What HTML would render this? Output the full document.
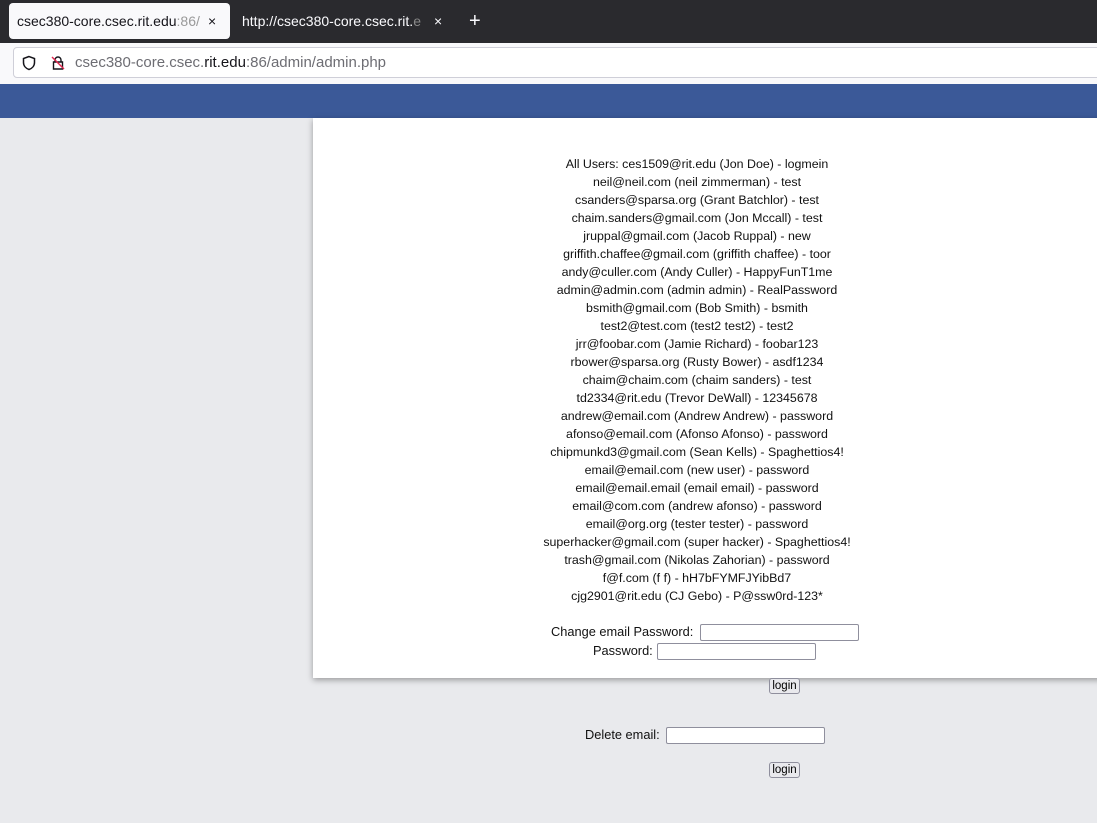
<!DOCTYPE html>
<html><head><meta charset="utf-8"><style>
body{margin:0;width:1097px;height:823px;overflow:hidden;background:#e9eaed;font-family:"Liberation Sans",sans-serif;position:relative}
.tabs{position:absolute;left:0;top:0;width:1097px;height:43px;background:#2a2a2e}
.tab1{position:absolute;left:9px;top:3px;width:221px;height:36px;background:#f9f9fb;border-radius:4px;font-size:14px;color:#15141a;line-height:36px;padding-left:8px;box-sizing:border-box;white-space:nowrap;overflow:hidden}
.tab2{position:absolute;left:242px;top:3px;font-size:14px;color:#fbfbfe;line-height:36px;white-space:nowrap}
.x{position:absolute;font-size:14px;top:3px;line-height:36px}
.bar{position:absolute;left:0;top:43px;width:1097px;height:41px;background:#f9f9fb}
.url{position:absolute;left:13px;top:47px;width:1090px;height:31px;border:1px solid #cfcfd8;border-radius:4px;background:#fff;box-sizing:border-box}
.urltxt{position:absolute;left:75px;top:54px;font-size:15px;color:#6d6d73}
.urltxt b{font-weight:normal;color:#15141a}
.blue{position:absolute;left:0;top:84px;width:1097px;height:34px;background:#3b5998}
.panel{position:absolute;left:313px;top:118px;width:800px;height:560px;background:#fff;box-shadow:0 2px 6px rgba(0,0,0,.35)}
.list{position:absolute;left:313px;top:155px;width:768px;text-align:center;font-size:12.4px;line-height:18px;color:#111}
.f{position:absolute;font-size:12.8px;color:#111}
.in{position:absolute;width:157px;height:15px;border:1px solid #8f8f9d;border-radius:2px;background:#fff}
.btn{position:absolute;width:29px;height:14px;border:1px solid #8f8f9d;border-radius:3px;background:#e9e9ed;font-size:11.5px;line-height:14px;text-align:center;color:#000}
</style></head><body>
<div class="tabs"></div>
<div class="tab1">csec380-core.csec.rit.edu<span style="color:#999">:86/</span></div>
<div class="x" style="left:208px;color:#15141a">×</div>
<div class="tab2">http://csec380-core.csec.rit.<span style="color:#888">e</span></div>
<div class="x" style="left:434px;color:#fbfbfe">×</div>
<div class="x" style="left:469px;color:#fbfbfe;font-size:20px">+</div>
<div class="bar"></div>
<div class="url"></div>
<svg style="position:absolute;left:21px;top:55px" width="16" height="16" viewBox="0 0 16 16"><path d="M8 1.5L2.5 3.5v4c0 3.5 2.5 6 5.5 7 3-1 5.5-3.5 5.5-7v-4z" fill="none" stroke="#15141a" stroke-width="1.5"/></svg>
<svg style="position:absolute;left:50px;top:55px" width="16" height="16" viewBox="0 0 16 16"><path d="M5 7V5a3 3 0 016 0v2M3.5 7h9v7h-9z" fill="none" stroke="#15141a" stroke-width="1.4"/><path d="M2 2l12 12" stroke="#e22850" stroke-width="1.4"/></svg>
<div class="urltxt">csec380-core.csec.<b>rit.edu</b>:86/admin/admin.php</div>
<div class="blue"></div>
<div class="panel"></div>
<div class="list">All Users: ces1509@rit.edu (Jon Doe) - logmein<br>neil@neil.com (neil zimmerman) - test<br>csanders@sparsa.org (Grant Batchlor) - test<br>chaim.sanders@gmail.com (Jon Mccall) - test<br>jruppal@gmail.com (Jacob Ruppal) - new<br>griffith.chaffee@gmail.com (griffith chaffee) - toor<br>andy@culler.com (Andy Culler) - HappyFunT1me<br>admin@admin.com (admin admin) - RealPassword<br>bsmith@gmail.com (Bob Smith) - bsmith<br>test2@test.com (test2 test2) - test2<br>jrr@foobar.com (Jamie Richard) - foobar123<br>rbower@sparsa.org (Rusty Bower) - asdf1234<br>chaim@chaim.com (chaim sanders) - test<br>td2334@rit.edu (Trevor DeWall) - 12345678<br>andrew@email.com (Andrew Andrew) - password<br>afonso@email.com (Afonso Afonso) - password<br>chipmunkd3@gmail.com (Sean Kells) - Spaghettios4!<br>email@email.com (new user) - password<br>email@email.email (email email) - password<br>email@com.com (andrew afonso) - password<br>email@org.org (tester tester) - password<br>superhacker@gmail.com (super hacker) - Spaghettios4!<br>trash@gmail.com (Nikolas Zahorian) - password<br>f@f.com (f f) - hH7bFYMFJYibBd7<br>cjg2901@rit.edu (CJ Gebo) - P@ssw0rd-123*</div>
<div class="f" style="left:551px;top:624px">Change email Password:</div><div class="in" style="left:700px;top:624px"></div>
<div class="f" style="left:593px;top:643px">Password:</div><div class="in" style="left:657px;top:643px"></div>
<div class="btn" style="left:769px;top:678px">login</div>
<div class="f" style="left:585px;top:727px">Delete email:</div><div class="in" style="left:666px;top:727px"></div>
<div class="btn" style="left:769px;top:762px">login</div>
</body></html>
